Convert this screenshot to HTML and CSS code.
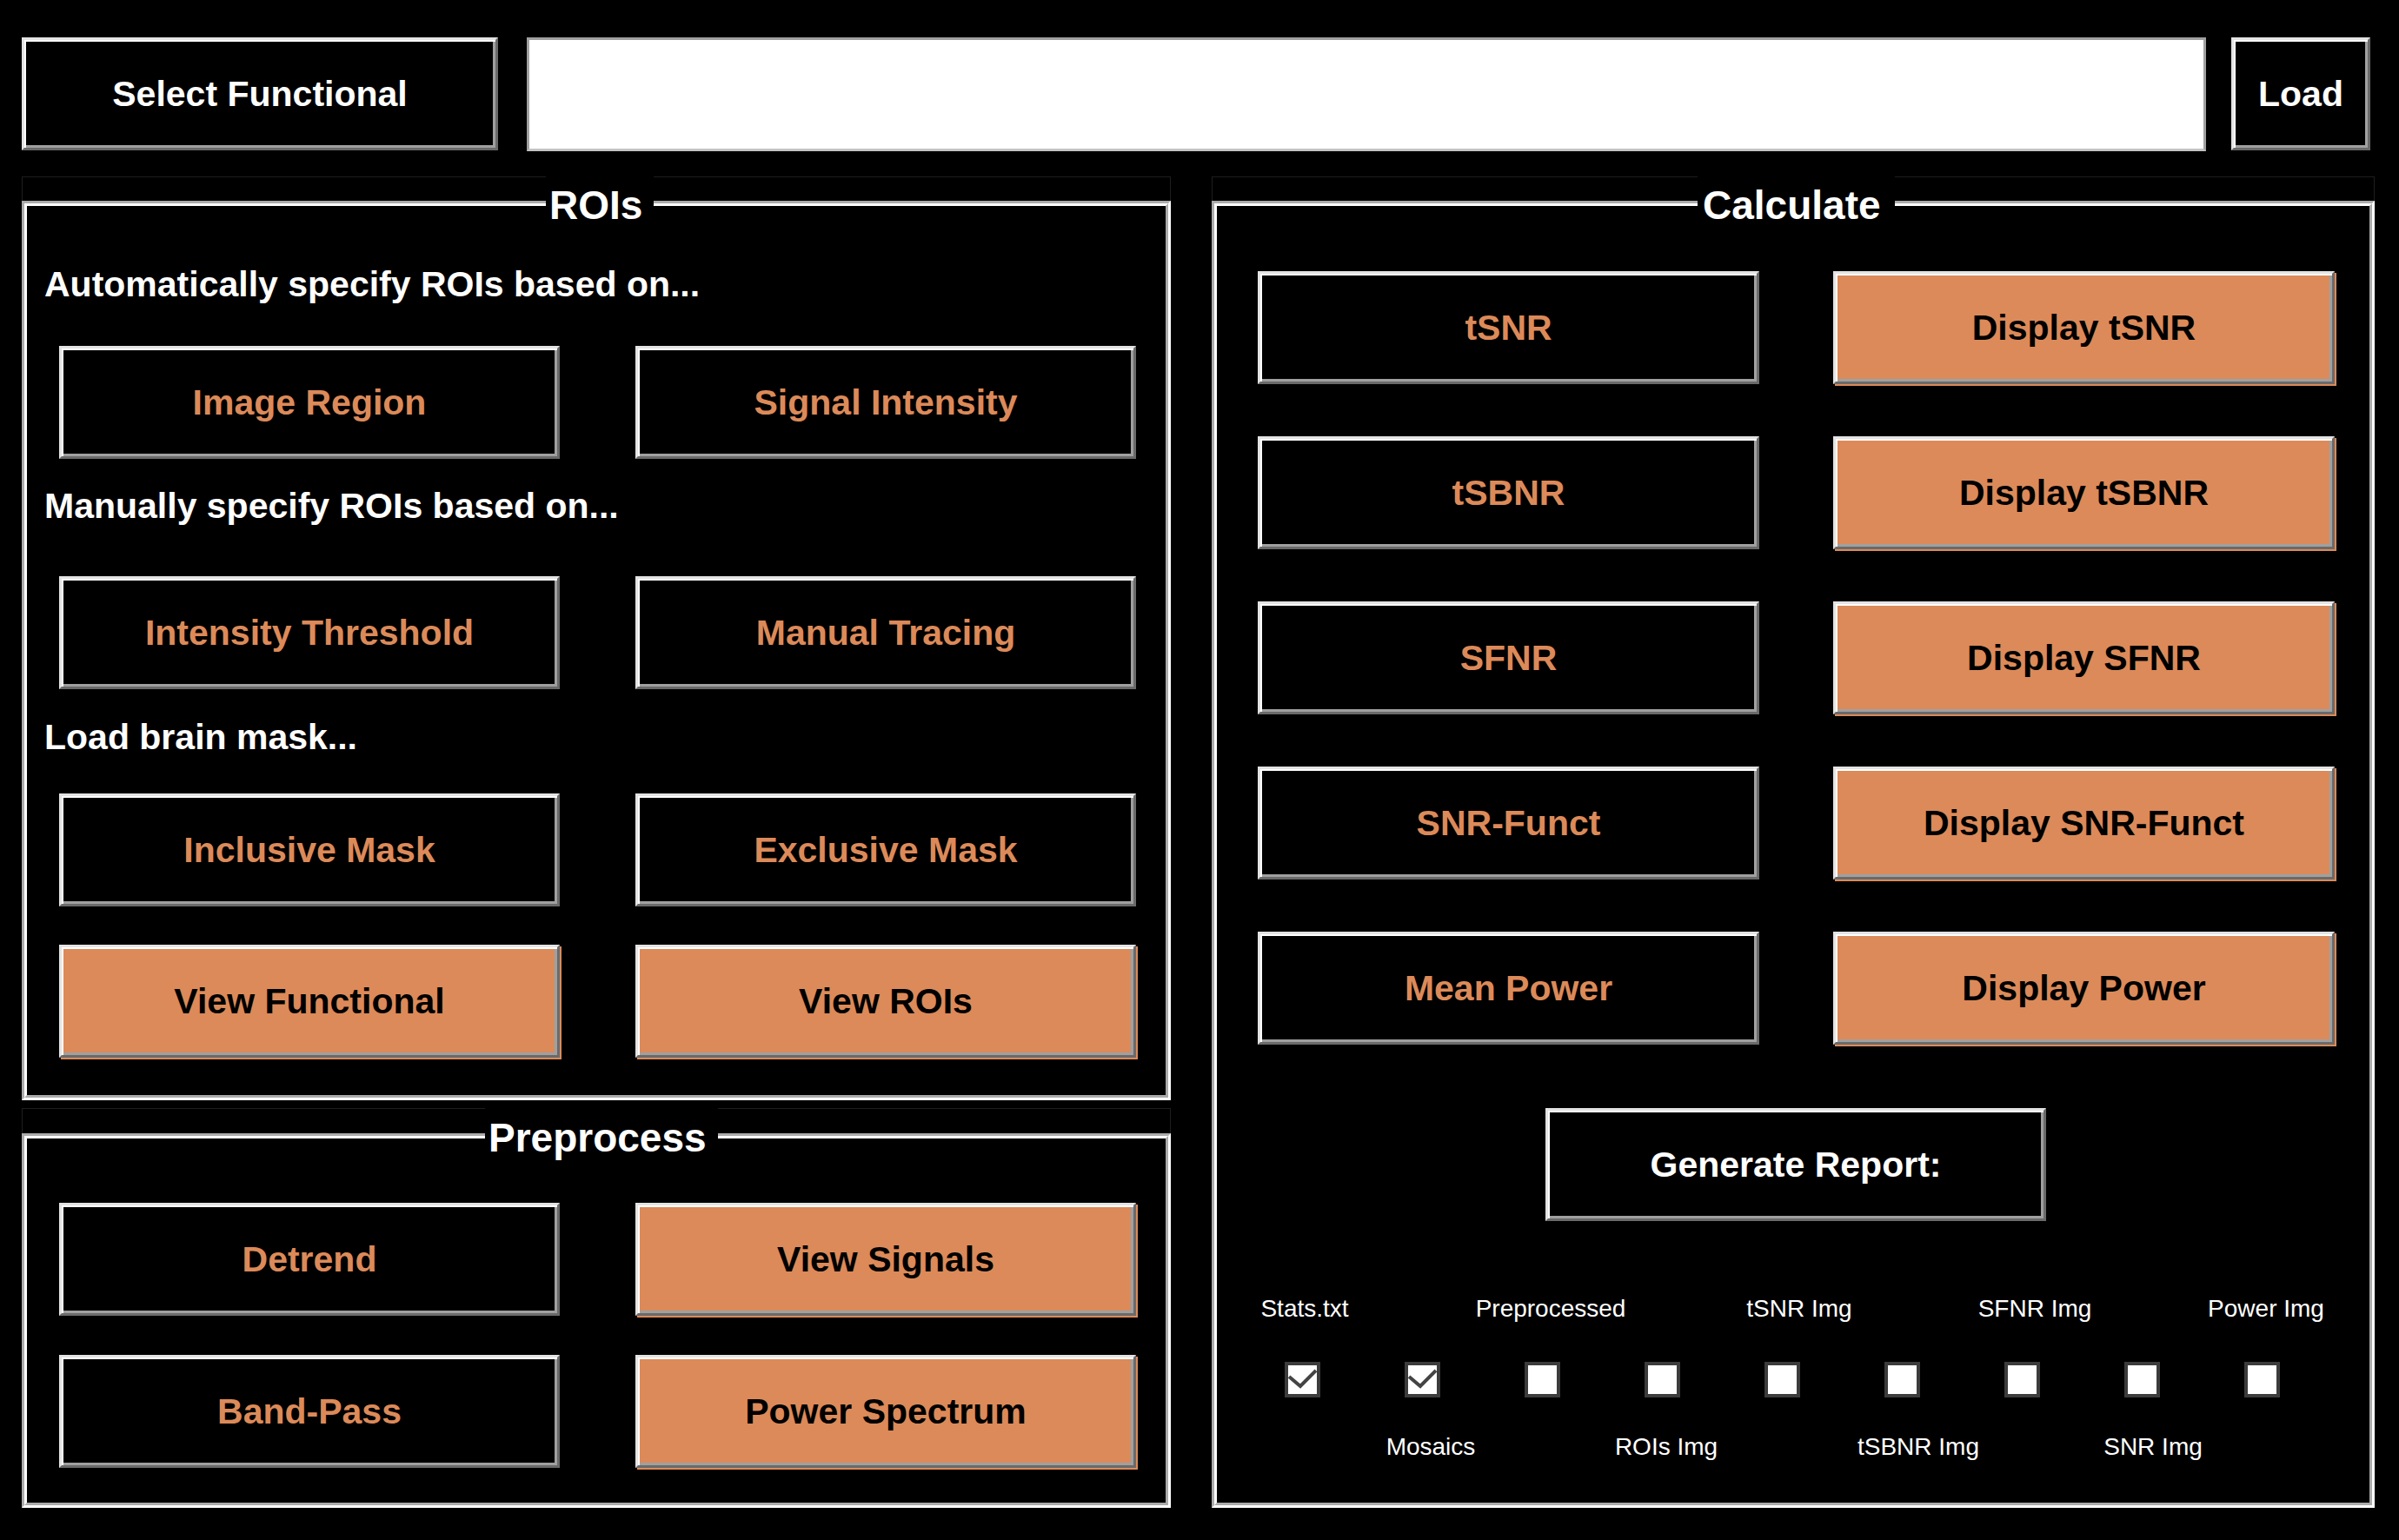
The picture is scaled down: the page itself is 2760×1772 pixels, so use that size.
FILE: index.html
```html
<!DOCTYPE html>
<html lang="en">
<head>
<meta charset="utf-8">
<title>ROI / SNR tool</title>
<link rel="stylesheet" href="styles.css">
</head>
<body>
<div class="app">
  <div class="topbar">
    <button class="btn btn-w sel">Select Functional</button>
    <div class="pathfield"></div>
    <button class="btn btn-w load">Load</button>
  </div>

  <div class="main">
    <div class="leftcol">
      <div class="pwrap rois-wrap">
        <fieldset class="panel rois">
          <legend>ROIs</legend>
          <div class="label l1">Automatically specify ROIs based on...</div>
          <div class="brow r1">
            <button class="btn">Image Region</button>
            <button class="btn">Signal Intensity</button>
          </div>
          <div class="label l2">Manually specify ROIs based on...</div>
          <div class="brow r2">
            <button class="btn">Intensity Threshold</button>
            <button class="btn">Manual Tracing</button>
          </div>
          <div class="label l3">Load brain mask...</div>
          <div class="brow r3">
            <button class="btn">Inclusive Mask</button>
            <button class="btn">Exclusive Mask</button>
          </div>
          <div class="brow r4">
            <button class="btn btn-o">View Functional</button>
            <button class="btn btn-o">View ROIs</button>
          </div>
        </fieldset>
      </div>

      <div class="pwrap pre-wrap">
        <fieldset class="panel pre">
          <legend>Preprocess</legend>
          <div class="brow p1">
            <button class="btn">Detrend</button>
            <button class="btn btn-o">View Signals</button>
          </div>
          <div class="brow p2">
            <button class="btn">Band-Pass</button>
            <button class="btn btn-o">Power Spectrum</button>
          </div>
        </fieldset>
      </div>
    </div>

    <div class="rightcol">
      <div class="pwrap calc-wrap">
        <fieldset class="panel calc">
          <legend>Calculate</legend>
          <div class="cgrid">
            <button class="btn">tSNR</button>
            <button class="btn btn-o">Display tSNR</button>
            <button class="btn">tSBNR</button>
            <button class="btn btn-o">Display tSBNR</button>
            <button class="btn">SFNR</button>
            <button class="btn btn-o">Display SFNR</button>
            <button class="btn">SNR-Funct</button>
            <button class="btn btn-o">Display SNR-Funct</button>
            <button class="btn">Mean Power</button>
            <button class="btn btn-o">Display Power</button>
          </div>
          <button class="btn btn-w report">Generate Report:</button>

          <div class="cbrow cbl-top">
            <span class="cbl sh-l7"><span>Stats.txt</span></span>
            <span class="cbl"></span>
            <span class="cbl"><span>Preprocessed</span></span>
            <span class="cbl"></span>
            <span class="cbl sh-r10"><span>tSNR Img</span></span>
            <span class="cbl"></span>
            <span class="cbl sh-r5"><span>SFNR Img</span></span>
            <span class="cbl"></span>
            <span class="cbl sh-l5"><span>Power Img</span></span>
          </div>
          <div class="cbrow cb-boxes">
            <span class="cbcell"><span class="cb"><svg viewBox="0 0 33 33" width="33" height="33"><polyline points="1,13 14,24 32,6" fill="none" stroke="#444" stroke-width="4"/></svg></span></span>
            <span class="cbcell"><span class="cb"><svg viewBox="0 0 33 33" width="33" height="33"><polyline points="1,13 14,24 32,6" fill="none" stroke="#444" stroke-width="4"/></svg></span></span>
            <span class="cbcell"><span class="cb"></span></span>
            <span class="cbcell"><span class="cb"></span></span>
            <span class="cbcell"><span class="cb"></span></span>
            <span class="cbcell"><span class="cb"></span></span>
            <span class="cbcell"><span class="cb"></span></span>
            <span class="cbcell"><span class="cb"></span></span>
            <span class="cbcell"><span class="cb"></span></span>
          </div>
          <div class="cbrow cbl-bot">
            <span class="cbl"></span>
            <span class="cbl"><span>Mosaics</span></span>
            <span class="cbl"></span>
            <span class="cbl sh-l5"><span>ROIs Img</span></span>
            <span class="cbl"></span>
            <span class="cbl sh-r9"><span>tSBNR Img</span></span>
            <span class="cbl"></span>
            <span class="cbl sh-r3"><span>SNR Img</span></span>
            <span class="cbl"></span>
          </div>
        </fieldset>
      </div>
    </div>
  </div>
</div>
</body>
</html>
```

FILE: styles.css
```css
* { box-sizing: border-box; }

html, body {
  margin: 0;
  padding: 0;
  background: #000;
}

body {
  width: 2760px;
  height: 1772px;
  overflow: hidden;
  font-family: "Liberation Sans", Arial, sans-serif;
  color: #fff;
}

.app {
  padding: 43px 0 0 25px;
}

/* ---------- top bar ---------- */
.topbar {
  display: flex;
  align-items: flex-start;
  height: 130px;
}

.btn {
  appearance: none;
  -webkit-appearance: none;
  margin: 0;
  padding: 0;
  height: 130px;
  display: flex;
  align-items: center;
  justify-content: center;
  font-family: "Liberation Sans", Arial, sans-serif;
  font-weight: bold;
  font-size: 41px;
  white-space: nowrap;
  background: #000;
  color: #dc8a59;
  border: 3px solid;
  border-color: #e3e3e3 #6a6a6a #6a6a6a #e3e3e3;
  box-shadow: inset 2px 2px 0 #fff, inset -3px -3px 0 #a0a0a0;
  cursor: pointer;
}

.btn-w { color: #fff; }

.btn-o {
  background: #dc8a59;
  color: #000;
  box-shadow: inset 2px 2px 0 #fff, inset -3px -3px 0 #a0a0a0, 2px 2px 0 #dc8a59;
}

.sel { width: 548px; }

.pathfield {
  width: 1932px;
  height: 131px;
  margin-left: 33px;
  background: #fff;
  border: 3px solid;
  border-color: #a0a0a0 #a0a0a0 #c4c4c4 #a0a0a0;
}

.load {
  width: 160px;
  margin-left: 29px;
}

/* ---------- main columns ---------- */
.main {
  display: flex;
  gap: 47px;
  margin-top: 30px;
}

.leftcol {
  width: 1322px;
  display: flex;
  flex-direction: column;
  gap: 9px;
}

.rightcol {
  width: 1338px;
}

.pwrap {
  box-shadow: inset 0 1px 0 #1e1e1e, inset 1px 0 0 #1e1e1e, inset -1px 0 0 #1e1e1e;
}

.rois-wrap { height: 1063px; }
.pre-wrap { height: 460px; }
.calc-wrap { height: 1532px; }

.panel {
  margin: 0;
  padding: 0;
  min-inline-size: 0;
  width: 100%;
  height: 100%;
  border: 6px groove #fff;
}

.panel > legend {
  font-size: 46px;
  font-weight: bold;
  line-height: 58px;
  padding: 4px 13px 0 4px;
  color: #fff;
  background: #000;
}

.rois > legend { margin-left: 597px; }
.pre > legend { margin-left: 527px; padding-top: 5px; }
.calc > legend { margin-left: 553px; padding: 4px 16px 0 6px; }

/* ---------- ROIs ---------- */
.label {
  font-size: 41px;
  font-weight: bold;
  line-height: 50px;
  margin-left: 20px;
  white-space: nowrap;
}

.brow {
  display: grid;
  grid-template-columns: 576px 576px;
  column-gap: 87px;
  margin-left: 37px;
}

.l1 { margin-top: 37px; }
.r1 { margin-top: 46px; }
.l2 { margin-top: 29px; }
.r2 { margin-top: 56px; }
.l3 { margin-top: 30px; }
.r3 { margin-top: 40px; }
.r4 { margin-top: 44px; }

/* ---------- Preprocess ---------- */
.p1 { margin-top: 46px; }
.p2 { margin-top: 45px; }

/* ---------- Calculate ---------- */
.cgrid {
  display: grid;
  grid-template-columns: 577px 577px;
  column-gap: 85px;
  row-gap: 60px;
  margin: 47px 0 0 47px;
}

.report {
  width: 576px;
  margin: 73px 0 0 378px;
}

.cbrow {
  display: grid;
  grid-template-columns: repeat(9, 138px);
  margin-left: 29px;
}

.cbl {
  display: flex;
  justify-content: center;
  padding-left: 20px;
  height: 32px;
  font-size: 28px;
  line-height: 32px;
  white-space: nowrap;
  color: #fff;
}

.cbl.sh-l7 { padding-left: 6px; }
.cbl.sh-l5 { padding-left: 10px; }
.cbl.sh-r3 { padding-left: 26px; }
.cbl.sh-r5 { padding-left: 30px; }
.cbl.sh-r9 { padding-left: 38px; }
.cbl.sh-r10 { padding-left: 40px; }

.cbl-top { margin-top: 85px; }
.cb-boxes { margin-top: 45px; }
.cbl-bot { margin-top: 41px; }

.cbcell {
  display: flex;
  justify-content: center;
}

.cb {
  width: 41px;
  height: 41px;
  background: #fff;
  border: 4px solid #3c3c3c;
  display: block;
}

.cb svg { display: block; }
```
